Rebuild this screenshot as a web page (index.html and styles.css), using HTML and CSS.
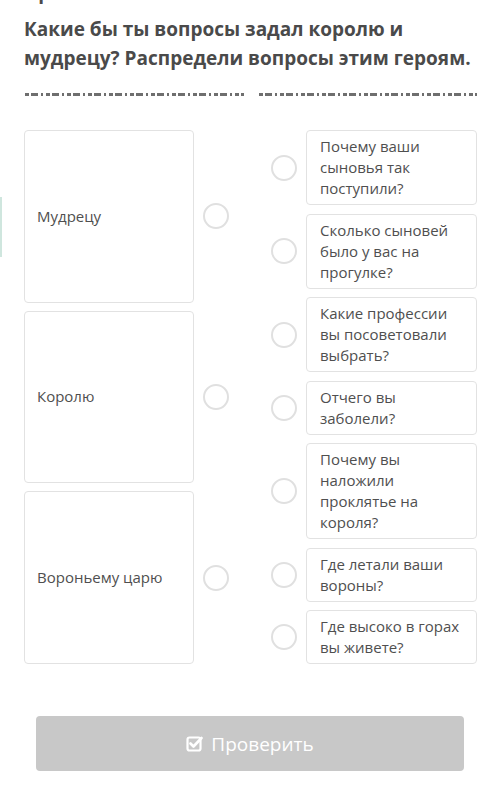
FILE: index.html
```
<!DOCTYPE html>
<html lang="ru">
<head>
    <meta charset="UTF-8">
    <meta name="viewport" content="width=device-width, initial-scale=1.0">
    <title>Распредели вопросы</title>
    <link rel="stylesheet" href="styles.css">
</head>
<body>
    <div class="peek"><span>Прочитай текст</span></div>
    <h2 class="title">Какие бы ты вопросы задал королю и мудрецу? Распредели вопросы этим героям.</h2>
    <div class="rule">
        <div class="dash"></div>
        <div class="dash"></div>
    </div>

    <div class="edge"></div>

    <div class="board">
        <div class="col-left">
            <div class="item">
                <div class="card big">Мудрецу</div>
                <span class="dot"></span>
            </div>
            <div class="item">
                <div class="card big">Королю</div>
                <span class="dot"></span>
            </div>
            <div class="item">
                <div class="card big">Вороньему царю</div>
                <span class="dot"></span>
            </div>
        </div>
        <div class="col-right">
            <div class="item">
                <span class="dot"></span>
                <div class="card">Почему ваши сыновья так поступили?</div>
            </div>
            <div class="item">
                <span class="dot"></span>
                <div class="card">Сколько сыновей было у вас на прогулке?</div>
            </div>
            <div class="item">
                <span class="dot"></span>
                <div class="card">Какие профессии вы посоветовали выбрать?</div>
            </div>
            <div class="item">
                <span class="dot"></span>
                <div class="card">Отчего вы заболели?</div>
            </div>
            <div class="item">
                <span class="dot"></span>
                <div class="card">Почему вы наложили проклятье на короля?</div>
            </div>
            <div class="item">
                <span class="dot"></span>
                <div class="card">Где летали ваши вороны?</div>
            </div>
            <div class="item">
                <span class="dot"></span>
                <div class="card">Где высоко в горах вы живете?</div>
            </div>
        </div>
    </div>

    <button class="check">
        <svg width="17" height="17" viewBox="0 0 17 17">
            <rect x="1.5" y="2.5" width="13" height="13" rx="2" fill="none" stroke="#fff" stroke-width="2.2"/>
            <path d="M4.5 8.5 L7.5 11.5 L15.5 3" fill="none" stroke="#fff" stroke-width="2.6" stroke-linecap="round" stroke-linejoin="round"/>
        </svg>
        Проверить
    </button>
</body>
</html>
```
FILE: styles.css
```
body {
    font-family: "Open Sans", "Noto Sans", sans-serif;
    background-color: #fff;
    color: #555;
    margin: 0;
    width: 500px;
}
.peek {
    height: 4px;
    overflow: hidden;
    display: flex;
    align-items: flex-end;
    padding-left: 24px;
}
.peek span {
    font-size: 19px;
    font-weight: bold;
    line-height: 23px;
    color: #4a4a4a;
}
.title {
    margin: 0;
    padding: 11px 24px 0;
    font-size: 19px;
    line-height: 29px;
    font-weight: bold;
    color: #4a4a4a;
}
.rule {
    display: flex;
    gap: 15px;
    margin: 20px 23px 0 25px;
}
.dash {
    flex: 1;
    height: 3px;
    background: repeating-linear-gradient(90deg, #555 0 4px, transparent 4px 6px, #555 6px 13px, transparent 13px 16px, #555 16px 18px, transparent 18px 21px);
    opacity: 0.85;
}
.edge {
    position: absolute;
    left: 0;
    top: 197px;
    width: 2px;
    height: 60px;
    background: #cfe6de;
}
.board {
    display: flex;
    padding-left: 24px;
    margin-top: 34px;
}
.col-left {
    width: 205px;
    display: grid;
    grid-template-rows: repeat(3, 1fr);
    gap: 8px;
}
.col-right {
    margin-left: 42px;
    width: 170px;
    display: flex;
    flex-direction: column;
    gap: 8.5px;
}
.item {
    display: flex;
    align-items: center;
    gap: 9px;
}
.card {
    width: 170px;
    flex-shrink: 0;
    box-sizing: border-box;
    border: 1px solid #e2e2e2;
    border-radius: 4px;
    padding: 5px 13px;
    font-size: 15px;
    line-height: 21px;
    color: #4f4f4f;
}
.card.big {
    align-self: stretch;
    display: flex;
    align-items: center;
    padding: 0 12px;
}
.col-right .card {
    width: 171px;
}
.dot {
    width: 22px;
    height: 22px;
    flex-shrink: 0;
    border: 2px solid #e0e0e0;
    border-radius: 50%;
}
.check {
    display: flex;
    align-items: center;
    justify-content: center;
    gap: 8px;
    width: 428px;
    height: 55px;
    margin: 52px 0 0 36px;
    border: none;
    border-radius: 4px;
    background-color: #c8c8c8;
    color: #fff;
    font-family: "Open Sans", "Noto Sans", sans-serif;
    font-size: 19px;
}
```
